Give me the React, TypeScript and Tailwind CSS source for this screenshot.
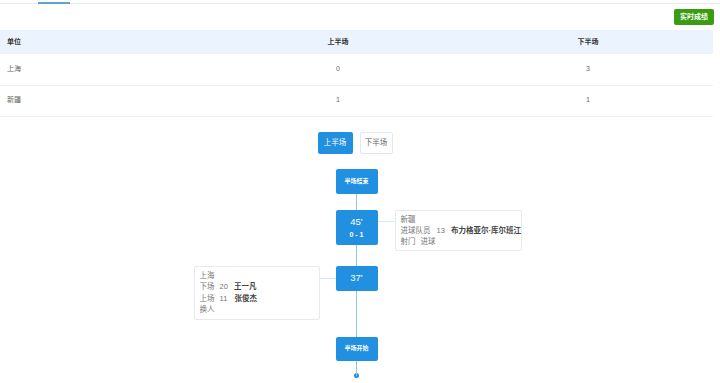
const font = { fontFamily: '"Liberation Sans", "Noto Sans CJK SC", sans-serif' };

const rows = [
  { team: "上海", first: 0, second: 3 },
  { team: "新疆", first: 1, second: 1 },
];

function Node({ children, className = "" }: { children: React.ReactNode; className?: string }) {
  return (
    <div
      className={`relative z-10 flex w-[42px] flex-col items-center justify-center rounded-[2px] bg-[#2290e0] text-white ${className}`}
    >
      {children}
    </div>
  );
}

export default function App() {
  return (
    <div className="min-h-screen w-[720px] bg-white text-[#666]" style={font}>
      {/* tab bar remains */}
      <div className="relative h-[4px] border-b border-[#e9ecf1]">
        <div className="absolute left-[38px] top-[2px] h-[2px] w-[32px] bg-[#5fa3d3]" />
      </div>

      <div className="w-[714px]">
        <div className="flex justify-end pt-[5px]">
          <button className="h-[16px] w-[40px] rounded-[2px] bg-[#3a9c11] text-[7px] font-bold text-white">
            实时成绩
          </button>
        </div>

        {/* score table */}
        <table className="mt-[5px] w-[713px] table-fixed border-collapse text-[7px]">
          <colgroup>
            <col className="w-[213px]" />
            <col className="w-[250px]" />
            <col className="w-[250px]" />
          </colgroup>
          <thead>
            <tr className="h-[24px] bg-[#ebf4fe] font-bold text-[#333]">
              <th className="pl-[7px] text-left">单位</th>
              <th className="text-center">上半场</th>
              <th className="text-center">下半场</th>
            </tr>
          </thead>
          <tbody>
            {rows.map((r) => (
              <tr key={r.team} className="h-[31px] border-b border-[#eef0f4]">
                <td className="pl-[7px]">{r.team}</td>
                <td className="text-center">{r.first}</td>
                <td className="text-center">{r.second}</td>
              </tr>
            ))}
          </tbody>
        </table>

        {/* half switch */}
        <div className="mt-[15px] flex justify-center gap-[7px] pr-[4px] text-[7.5px]">
          <button className="h-[22px] w-[35px] rounded-[2px] bg-[#2290e0] text-white">上半场</button>
          <button className="h-[22px] w-[33px] rounded-[2px] border border-[#e4e7ed] bg-white text-[#666]">
            下半场
          </button>
        </div>

        {/* timeline */}
        <div className="relative mt-[15px] w-[713px] pb-[7px]">
          <div className="absolute left-[355.5px] top-[12px] bottom-[9px] w-px bg-[#8fc4ec]" />

          <div className="grid grid-cols-[1fr_42px_1fr]">
            <div />
            <Node className="h-[25px]">
              <span className="text-[6px] font-bold">半场结束</span>
            </Node>
            <div />
          </div>

          <div className="mt-[16px] grid grid-cols-[1fr_42px_1fr]">
            <div />
            <Node className="h-[35px] self-start">
              <span className="text-[9.5px] leading-[12px]">45'</span>
              <span className="mt-[2px] text-[7px] font-bold leading-[9px]">0 - 1</span>
            </Node>
            <div className="flex items-start">
              <div className="mt-[11px] h-px w-[17px] bg-[#d6e6f3]" />
              <div className="w-[127px] rounded-[2px] border border-[#e6e9ee] px-[5px] py-[3px] text-[7.5px] leading-[11px] text-[#777]">
                <div>新疆</div>
                <div className="whitespace-nowrap">
                  进球队员 <span className="ml-[4px]">13</span>
                  <span className="ml-[6px] font-bold text-[#444]">布力格亚尔·库尔班江</span>
                </div>
                <div>
                  射门 <span className="ml-[3px]">进球</span>
                </div>
              </div>
            </div>
          </div>

          <div className="mt-[15px] grid grid-cols-[1fr_42px_1fr]">
            <div className="flex items-start justify-end">
              <div className="w-[126px] rounded-[2px] border border-[#e6e9ee] px-[5px] py-[3px] text-[7.5px] leading-[11.5px] text-[#777]">
                <div>上海</div>
                <div>
                  下场 <span className="ml-[3px]">20</span>
                  <span className="ml-[6px] font-bold text-[#444]">王一凡</span>
                </div>
                <div>
                  上场 <span className="ml-[3px]">11</span>
                  <span className="ml-[7px] font-bold text-[#444]">张俊杰</span>
                </div>
                <div>换人</div>
              </div>
              <div className="mt-[12px] h-px w-[16px] bg-[#d6e6f3]" />
            </div>
            <Node className="h-[25px] self-start">
              <span className="text-[9.5px]">37'</span>
            </Node>
            <div />
          </div>

          <div className="mt-[17px] grid grid-cols-[1fr_42px_1fr]">
            <div />
            <Node className="h-[24px]">
              <span className="text-[6px] font-bold">半场开始</span>
            </Node>
            <div />
          </div>

          <div className="mt-[12px] flex justify-center">
            <div className="ml-[-1px] h-[5px] w-[5px] rounded-full bg-[#2290e0]" />
          </div>
        </div>
      </div>
    </div>
  );
}
